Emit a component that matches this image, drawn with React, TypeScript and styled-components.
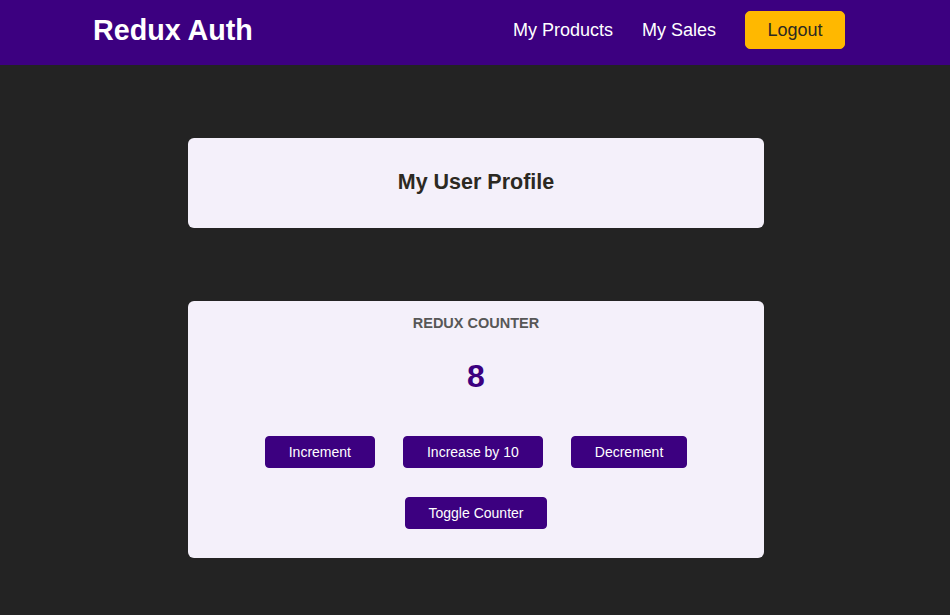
import styled, { createGlobalStyle } from "styled-components";

const GlobalStyle = createGlobalStyle`
  * { box-sizing: border-box; }
  body {
    margin: 0;
    background: #232323;
    font-family: "Liberation Sans", Arial, sans-serif;
  }
`;

const buttons = ["Increment", "Increase by 10", "Decrement"];

export default function App() {
  return (
    <>
      <GlobalStyle />
      <Header>
        <Brand>Redux Auth</Brand>
        <Nav>
          <NavLink href="#">My Products</NavLink>
          <NavLink href="#">My Sales</NavLink>
          <LogoutButton>Logout</LogoutButton>
        </Nav>
      </Header>

      <Main>
        <ProfileCard>
          <ProfileTitle>My User Profile</ProfileTitle>
        </ProfileCard>

        <CounterCard>
          <CounterTitle>Redux Counter</CounterTitle>
          <Value>8</Value>
          <ButtonRow>
            {buttons.map((label) => (
              <ActionButton key={label}>{label}</ActionButton>
            ))}
          </ButtonRow>
          <ButtonRow>
            <ActionButton>Toggle Counter</ActionButton>
          </ButtonRow>
        </CounterCard>
      </Main>
    </>
  );
}

const Header = styled.header`
  height: 65px;
  display: flex;
  justify-content: space-between;
  align-items: center;
  padding: 0 105px 5px 93px;
  background: #3c0080;
`;

const Brand = styled.h1`
  margin: 0;
  color: white;
  font-size: 28.7px;
  font-weight: bold;
`;

const Nav = styled.nav`
  display: flex;
  align-items: center;
  gap: 29px;
`;

const NavLink = styled.a`
  color: white;
  text-decoration: none;
  font-size: 18px;
`;

const LogoutButton = styled.button`
  font-family: inherit;
  font-size: 18px;
  line-height: 20px;
  width: 100px;
  height: 38px;
  background: #ffb800;
  border: 1px solid #ffb800;
  border-radius: 5px;
  color: #2c2922;
  cursor: pointer;
`;

const Main = styled.main`
  display: flex;
  flex-direction: column;
  align-items: center;
  gap: 73px;
  padding: 73px 0 0 2px;
`;

const Card = styled.section`
  width: 576px;
  background: #f4f0fa;
  border-radius: 6px;
  text-align: center;
`;

const ProfileCard = styled(Card)`
  height: 90px;
  display: flex;
  align-items: center;
  justify-content: center;
  padding-bottom: 2px;
`;

const ProfileTitle = styled.h2`
  margin: 0;
  font-size: 21.5px;
  font-weight: bold;
  color: #2c2922;
`;

const CounterCard = styled(Card)`
  padding: 14px 16px 29px;
`;

const CounterTitle = styled.h1`
  margin: 0;
  font-size: 14.5px;
  line-height: 16px;
  text-transform: uppercase;
  color: #575757;
`;

const Value = styled.div`
  margin: 27px 0 41px;
  font-size: 32px;
  line-height: 37px;
  font-weight: bold;
  color: #3c0080;
`;

const ButtonRow = styled.div`
  display: flex;
  justify-content: center;
  gap: 28px;
  & + & {
    margin-top: 29px;
  }
`;

const ActionButton = styled.button`
  font-family: inherit;
  font-size: 14px;
  line-height: 16px;
  padding: 7px 23px;
  background: #3c0080;
  border: 1px solid #3c0080;
  border-radius: 4px;
  color: white;
  cursor: pointer;
`;
